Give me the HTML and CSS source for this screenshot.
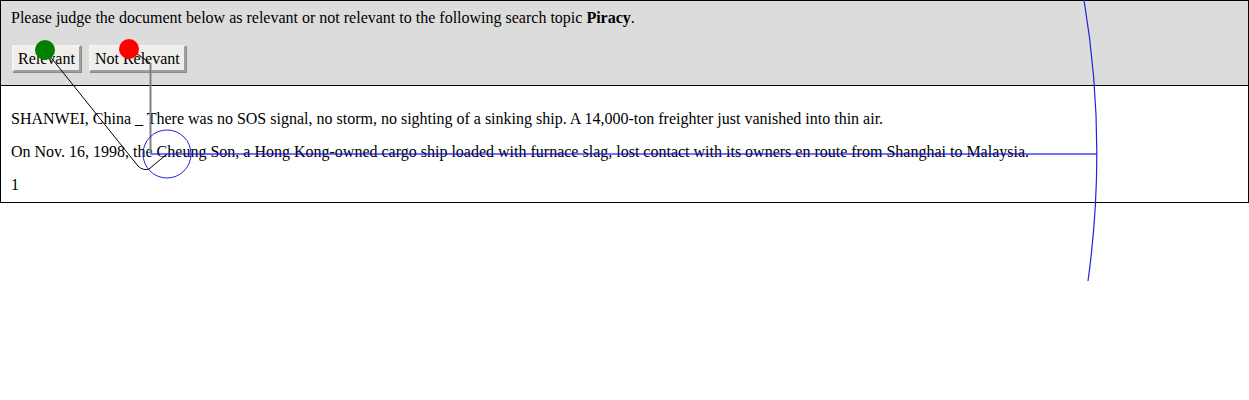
FILE: index.html
```html
<!DOCTYPE html>
<html>
<head>
<meta charset="utf-8">
<link rel="stylesheet" href="styles.css">
</head>
<body>
<div class="page">
  <div class="task">
    <div class="prompt">Please judge the document below as relevant or not relevant to the following search topic <b>Piracy</b>.</div>
    <div class="actions">
      <button class="btn" type="button">Relevant</button>
      <button class="btn" type="button">Not Relevant</button>
    </div>
  </div>
  <div class="doc">
    <p class="para">SHANWEI, China _ There was no SOS signal, no storm, no sighting of a sinking ship. A 14,000-ton freighter just vanished into thin air.</p>
    <p class="para">On Nov. 16, 1998, the Cheung Son, a Hong Kong-owned cargo ship loaded with furnace slag, lost contact with its owners en route from Shanghai to Malaysia.</p>
    <div class="pagenum">1</div>
  </div>
  <svg class="gaze" width="1249" height="400" viewBox="0 0 1249 400">
    <path d="M45 50 L138 166 Q143 171 149 169 L167 154" fill="none" stroke="#000" stroke-width="1"/>
    <path d="M130 49 L150 63" fill="none" stroke="#000" stroke-width="1"/>
    <path d="M150.5 63 L150.5 153" fill="none" stroke="#808080" stroke-width="2"/>
    <path d="M150 154 L1097 154" fill="none" stroke="#0000ff" stroke-opacity="0.55" stroke-width="2"/>
    <circle cx="167" cy="154" r="24" fill="none" stroke="#2222dd" stroke-width="1"/>
    <path d="M1084 0 A930 930 0 0 1 1088 281" fill="none" stroke="#2222dd" stroke-width="1.2"/>
    <circle cx="45" cy="50" r="10" fill="#008000"/>
    <circle cx="129" cy="49" r="10" fill="#ff0000"/>
  </svg>
</div>
</body>
</html>
```
FILE: styles.css
```css
html, body {
  margin: 0;
  padding: 0;
  background: #fff;
}
body {
  font-family: "Liberation Serif", "Times New Roman", serif;
  font-size: 16px;
  color: #000;
}
.page {
  position: relative;
  width: 1249px;
  height: 400px;
}
.task {
  background: #dcdcdc;
  border: 1px solid #000;
  height: 84px;
  box-sizing: content-box;
  padding: 0 10px;
  display: flex;
  flex-direction: column;
}
.prompt {
  margin-top: 8px;
  line-height: 18px;
}
.actions {
  margin-top: 18px;
  display: flex;
  gap: 8px;
  padding-left: 1px;
}
.btn {
  font-family: "Liberation Serif", "Times New Roman", serif;
  font-size: 16px;
  color: #000;
  background: #efeeea;
  border: 2px outset #f4f3ef;
  box-shadow: 1px 1px 0 #8a8a8a;
  height: 27px;
  padding: 0 4px;
  margin: 0;
}
.doc {
  border: 1px solid #000;
  border-top: none;
  padding: 8px 10px 9px 10px;
  height: 99px;
  box-sizing: content-box;
}
.para {
  margin: 16px 0;
  line-height: 17px;
}
.para + .para {
  margin-top: 15px;
}
.pagenum {
  margin-top: 14px;
  line-height: 17px;
}
.gaze {
  position: absolute;
  left: 0;
  top: 0;
  pointer-events: none;
}
```
